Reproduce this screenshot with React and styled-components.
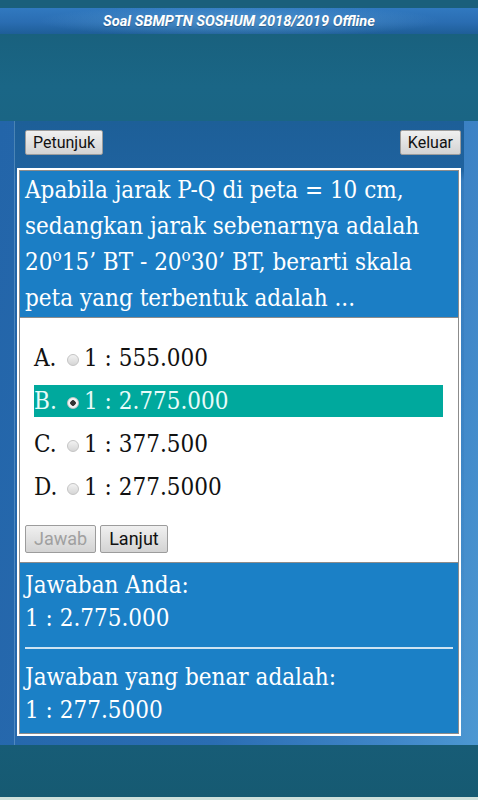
import styled, { createGlobalStyle } from "styled-components";

const GlobalStyle = createGlobalStyle`
  html, body {
    margin: 0;
    padding: 0;
  }
  body {
    background: #175b74;
    font-family: Roboto, "Liberation Sans", sans-serif;
  }
`;

const serif = `"DejaVu Serif Condensed", "DejaVu Serif", serif`;

const Screen = styled.div`
  width: 478px;
  height: 800px;
  display: flex;
  flex-direction: column;
  overflow: hidden;
  background: #175b74;
`;

const TopStrip = styled.div`
  height: 8px;
  background: #1a5f7b;
`;

const TitleBar = styled.header`
  height: 26px;
  display: flex;
  align-items: center;
  justify-content: center;
  background:
    radial-gradient(ellipse 60% 90% at 50% 50%, rgba(120, 190, 235, 0.45), transparent 70%),
    linear-gradient(to bottom, #3179c0 0%, #2a6db2 55%, #1e5e98 100%);
  color: #fff;
  font: italic 700 14.6px Roboto, "Liberation Sans", sans-serif;
  text-shadow: 0 1px 1px rgba(0, 0, 0, 0.25);
`;

const Backdrop = styled.div`
  height: 87px;
  background: linear-gradient(to bottom, #19617e, #1a6686 60%, #1a6584);
`;

const Stage = styled.div`
  height: 624px;
  padding: 0 14px;
  background: linear-gradient(100deg, #2365a9 0%, #2a6db3 55%, #3f86c8 85%, #4c98d2 100%);
`;

const Panel = styled.section`
  height: 100%;
  border-left: 1px solid rgba(160, 200, 230, 0.35);
  background: linear-gradient(to bottom, #1d5f98 0, #1f629e 48px, rgba(30, 95, 155, 0.2) 60px, transparent);
`;

const Toolbar = styled.div`
  height: 47px;
  box-sizing: border-box;
  display: flex;
  justify-content: space-between;
  align-items: flex-start;
  padding: 9px 3px 0 10px;
`;

const Button = styled.button`
  height: ${(p) => (p.$big ? 28 : 25)}px;
  padding: 0 ${(p) => (p.$big ? 8 : 7)}px;
  border: 1px solid #9c9c9c;
  border-radius: 2px;
  background: linear-gradient(to bottom, #f0f0f0, #d3d3d3);
  color: ${(p) => (p.disabled ? "#a0a0a0" : "#111")};
  font-family: Roboto, "Liberation Sans", sans-serif;
  font-size: ${(p) => (p.$big ? 18 : 16)}px;
  line-height: 1;
`;

const Card = styled.div`
  margin-left: 2px;
  width: 444px;
  box-sizing: border-box;
  background: #fff;
  padding: 2px;
`;

const Inner = styled.div`
  border: 1px solid #8c8c8c;
`;

const Question = styled.div`
  background: #1b7ec5;
  color: #fff;
  padding: 1px 4px 1px 5px;
  font-family: ${serif};
  font-size: 24px;
  line-height: 36px;
  border-bottom: 1px solid #8c8c8c;

  sup {
    font-size: 17px;
    line-height: 0;
    vertical-align: 9px;
  }
`;

const Options = styled.div`
  background: #fff;
  padding: 24px 15px 0 14px;
  display: flex;
  flex-direction: column;
  gap: 11px;
`;

const Option = styled.div`
  height: 32px;
  display: flex;
  align-items: center;
  background: ${(p) => (p.$selected ? "#00a99d" : "transparent")};
  color: ${(p) => (p.$selected ? "#e8fbf9" : "#111")};
  font-family: ${serif};
  font-size: 24px;
`;

const Letter = styled.span`
  width: 33px;
`;

const Radio = styled.span`
  width: 12px;
  height: 12px;
  margin: 4px 5px 0 0;
  box-sizing: border-box;
  border-radius: 50%;
  border: 1px solid #c4c4c4;
  background: ${(p) =>
    p.$checked
      ? "radial-gradient(circle, #333 0 2.5px, #f4f4f4 3px)"
      : "linear-gradient(to bottom, #f2f2f2, #d6d6d6)"};
`;

const Actions = styled.div`
  display: flex;
  gap: 4px;
  padding: 22px 0 9px 5px;
  background: #fff;
  border-bottom: 1px solid #8c8c8c;
`;

const Result = styled.div`
  background: #1b80c6;
  color: #fff;
  padding: 6px 5px 6px 5px;
  font-family: ${serif};
  font-size: 24px;
  line-height: 33px;
`;

const Divider = styled.hr`
  margin: 12px 0;
  border: 0;
  border-top: 2px solid #cde3f2;
`;

const Footer = styled.div`
  flex: 1;
  background: linear-gradient(to bottom, #175c76, #165a72);
  border-bottom: 3px solid #cfe1dc;
`;

const choices = [
  { key: "A", text: "1 : 555.000" },
  { key: "B", text: "1 : 2.775.000" },
  { key: "C", text: "1 : 377.500" },
  { key: "D", text: "1 : 277.5000" },
];

export default function App() {
  const picked = "B";

  return (
    <>
      <GlobalStyle />
      <Screen>
        <TopStrip />
        <TitleBar>Soal SBMPTN SOSHUM 2018/2019 Offline</TitleBar>
        <Backdrop />
        <Stage>
          <Panel>
            <Toolbar>
              <Button>Petunjuk</Button>
              <Button>Keluar</Button>
            </Toolbar>
            <Card>
              <Inner>
                <Question>
                  Apabila jarak P-Q di peta = 10 cm, sedangkan jarak sebenarnya
                  adalah 20<sup>o</sup>15’ BT - 20<sup>o</sup>30’ BT, berarti
                  skala peta yang terbentuk adalah ...
                </Question>
                <Options>
                  {choices.map((c) => (
                    <Option key={c.key} $selected={c.key === picked}>
                      <Letter>{c.key}.</Letter>
                      <Radio $checked={c.key === picked} />
                      {c.text}
                    </Option>
                  ))}
                </Options>
                <Actions>
                  <Button $big disabled>
                    Jawab
                  </Button>
                  <Button $big>Lanjut</Button>
                </Actions>
                <Result>
                  Jawaban Anda:
                  <br />1 : 2.775.000
                  <Divider />
                  Jawaban yang benar adalah:
                  <br />1 : 277.5000
                </Result>
              </Inner>
            </Card>
          </Panel>
        </Stage>
        <Footer />
      </Screen>
    </>
  );
}
